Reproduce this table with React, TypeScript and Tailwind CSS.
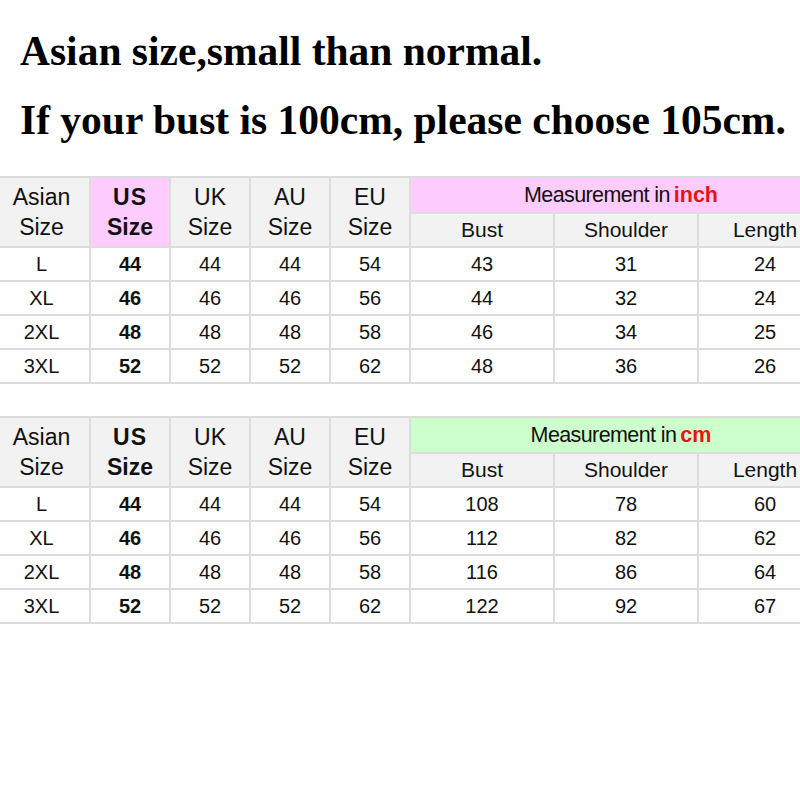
const sizes = ["L", "XL", "2XL", "3XL"]
const us = ["44", "46", "48", "52"]
const uk = ["44", "46", "48", "52"]
const au = ["44", "46", "48", "52"]
const eu = ["54", "56", "58", "62"]

const inch = [
  ["43", "31", "24"],
  ["44", "32", "24"],
  ["46", "34", "25"],
  ["48", "36", "26"],
]

const cm = [
  ["108", "78", "60"],
  ["112", "82", "62"],
  ["116", "86", "64"],
  ["122", "92", "67"],
]

function SizeTable({ unit, accent, rows }: { unit: string; accent: string; rows: string[][] }) {
  const head = "bg-[#f2f2f2] flex flex-col items-center justify-center leading-[30px] text-[23px] row-span-2"
  const cell = "bg-white flex items-center justify-center h-[32px] text-[20px]"
  return (
    <div className="w-[831px] grid grid-cols-[89px_78px_78px_78px_78px_142px_142px_1fr] grid-rows-[34px_32px] auto-rows-[32px] gap-[2px] bg-[#dcdcdc] py-[2px] text-[#111]">
      <div className={`${head} pr-[6px]`}>
        <span>Asian</span>
        <span>Size</span>
      </div>
      <div className={`${head} ${accent} font-bold text-[21px]`}>
        <span className="tracking-[1px]">US</span>
        <span>Size</span>
      </div>
      <div className={head}>
        <span>UK</span>
        <span>Size</span>
      </div>
      <div className={head}>
        <span>AU</span>
        <span>Size</span>
      </div>
      <div className={head}>
        <span>EU</span>
        <span>Size</span>
      </div>
      <div className={`${accent} col-span-3 flex items-center justify-center text-[21.5px] tracking-[-0.6px]`}>
        <span>Measurement in</span>
        <span className="ml-[4px] text-[#ee1111] font-bold tracking-normal">{unit}</span>
      </div>
      <div className="bg-[#f2f2f2] flex items-center justify-center text-[21px]">Bust</div>
      <div className="bg-[#f2f2f2] flex items-center justify-center text-[21px]">Shoulder</div>
      <div className="bg-[#f2f2f2] flex items-center justify-center text-[21px]">Length</div>
      {sizes.map((s, i) => (
        <>
          <div key={s + "a"} className={`${cell} pr-[6px]`}>{s}</div>
          <div key={s + "b"} className={`${cell} font-bold`}>{us[i]}</div>
          <div key={s + "c"} className={cell}>{uk[i]}</div>
          <div key={s + "d"} className={cell}>{au[i]}</div>
          <div key={s + "e"} className={cell}>{eu[i]}</div>
          <div key={s + "f"} className={cell}>{rows[i][0]}</div>
          <div key={s + "g"} className={cell}>{rows[i][1]}</div>
          <div key={s + "h"} className={cell}>{rows[i][2]}</div>
        </>
      ))}
    </div>
  )
}

export default function App() {
  return (
    <div className="w-[800px] h-[800px] overflow-hidden bg-white font-['Liberation_Sans',Arial,sans-serif]">
      <div className="pl-[20px] pt-[17px] h-[176px] font-['Liberation_Serif','Times_New_Roman',serif] font-bold text-[41.5px] text-black leading-[69px]">
        <div>Asian size,small than normal.</div>
        <div>If your bust is 100cm, please choose 105cm.</div>
      </div>
      <SizeTable unit="inch" accent="bg-[#ffccff]" rows={inch} />
      <div className="mt-[32px]">
        <SizeTable unit="cm" accent="bg-[#ccffcc]" rows={cm} />
      </div>
    </div>
  )
}
